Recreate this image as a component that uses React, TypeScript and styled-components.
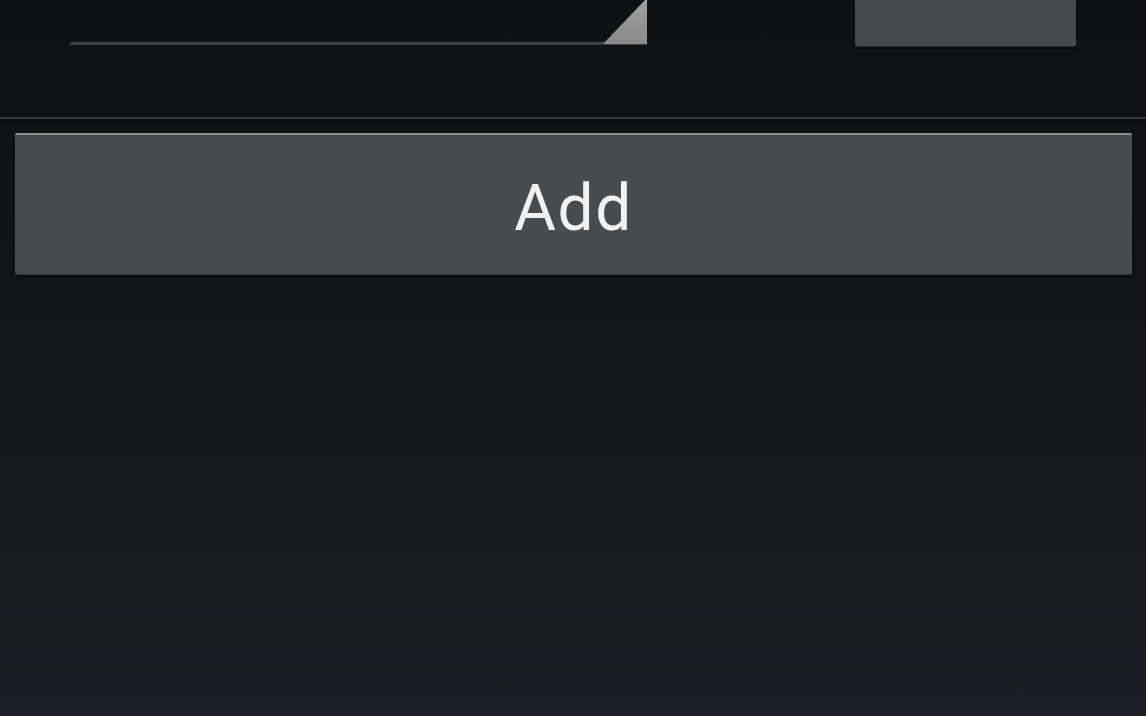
import React from "react";
import styled, { createGlobalStyle } from "styled-components";

const GlobalStyle = createGlobalStyle`
  html, body {
    margin: 0;
    padding: 0;
    height: 100%;
    background: #101114;
  }
  #root {
    min-height: 100%;
  }
`;

const Screen = styled.div`
  width: 1146px;
  height: 716px;
  overflow: hidden;
  display: flex;
  flex-direction: column;
  background: linear-gradient(180deg, #0f1013 0%, #121316 30%, #17181c 60%, #1c1e23 100%);
  font-family: Roboto, "Open Sans", "Liberation Sans", sans-serif;
`;

const TopRow = styled.div`
  height: 117px;
  display: flex;
  align-items: flex-start;
  padding: 0 70px;
  gap: 208px;
  box-sizing: border-box;
`;

const Spinner = styled.div`
  position: relative;
  width: 577px;
  height: 45px;
  box-sizing: border-box;
  border-bottom: 3px solid #3d3e41;
`;

const SpinnerCorner = styled.div`
  position: absolute;
  right: 0;
  bottom: -2px;
  width: 44px;
  height: 46px;
  background: linear-gradient(180deg, #a0a0a0 0%, #8a8a8a 100%);
  clip-path: polygon(100% 0, 100% 100%, 0 100%);
`;

const SmallButton = styled.button`
  width: 221px;
  height: 46px;
  border: none;
  border-radius: 0 0 2px 2px;
  background: #48494b;
  box-shadow: 0 1px 0 #2b2c2e, 0 2px 2px rgba(0, 0, 0, 0.6);
  padding: 0;
`;

const Divider = styled.div`
  height: 2px;
  background: #36373a;
  box-shadow: 0 2px 6px rgba(0, 0, 0, 0.55);
`;

const Content = styled.div`
  padding: 14px 14px 0 15px;
`;

const AddButton = styled.button`
  width: 100%;
  height: 142px;
  display: flex;
  align-items: center;
  justify-content: center;
  border: none;
  border-radius: 2px;
  background: #4a4b4d;
  border-top: 2px solid #8c8c8c;
  box-shadow: inset 0 -2px 0 #3e3f41, 0 2px 3px rgba(0, 0, 0, 0.7);
  color: #f2f2f2;
  font-family: Roboto, "Open Sans", "Liberation Sans", sans-serif;
  font-size: 64px;
  font-weight: 400;
  letter-spacing: 1.5px;
  padding: 6px 0 0 0;
  box-sizing: border-box;
  cursor: pointer;
`;

export default function App() {
  return (
    <>
      <GlobalStyle />
      <Screen>
        <TopRow>
          <Spinner>
            <SpinnerCorner />
          </Spinner>
          <SmallButton aria-label="button" />
        </TopRow>
        <Divider />
        <Content>
          <AddButton>Add</AddButton>
        </Content>
      </Screen>
    </>
  );
}
